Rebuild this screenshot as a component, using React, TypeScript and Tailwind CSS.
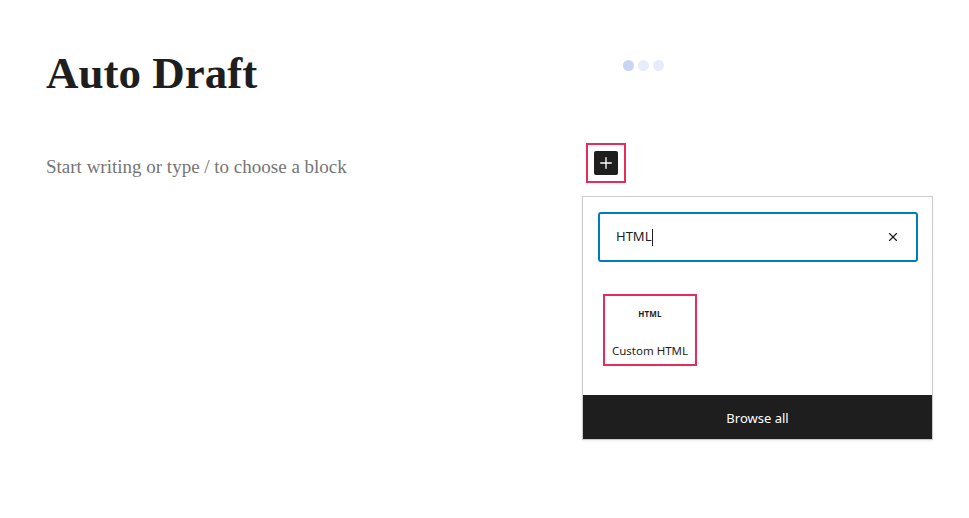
import { X, Plus } from "lucide-react";

const serif = { fontFamily: '"Liberation Serif", serif' };

export default function App() {
  return (
    <div
      className="relative w-[969px] h-[518px] bg-white overflow-hidden"
      style={{ fontFamily: '"Noto Sans", "Open Sans", sans-serif' }}
    >
      {/* Editor canvas */}
      <div className="flex flex-col pl-[46px]">
        <div className="flex items-start mt-[51px]">
          <h1 className="w-[577px] shrink-0 text-[45px] leading-none font-bold text-[#1e1e1e]" style={serif}>
            Auto Draft
          </h1>
          <div className="flex gap-[4px] mt-[9px]">
            <span className="w-[11px] h-[11px] rounded-full bg-[#c9d5f2]" />
            <span className="w-[11px] h-[11px] rounded-full bg-[#e6ecfa]" />
            <span className="w-[11px] h-[11px] rounded-full bg-[#e6ecfa]" />
          </div>
        </div>

        <div className="flex items-start mt-[47px]">
          <p className="w-[540px] shrink-0 text-[19px] leading-[40px] pt-[4px] text-[#757575]" style={serif}>
            Start writing or type / to choose a block
          </p>
          <div className="w-[40px] h-[40px] border-2 border-[#e62c5a] flex items-center justify-center">
            <button className="w-[24px] h-[24px] rounded-[2px] bg-[#1e1e1e] text-white flex items-center justify-center">
              <Plus size={18} strokeWidth={1.8} />
            </button>
          </div>
        </div>
      </div>

      {/* Inserter popover */}
      <div className="absolute left-[582px] top-[196px] w-[351px] h-[244px] bg-white border border-[#cccccc] shadow-[0_1px_2px_rgba(0,0,0,0.08)] flex flex-col">
        <div className="flex-1 px-[15px] pt-[15px]">
          <div className="h-[50px] w-[320px] border-2 border-[#007cba] rounded-[3px] flex items-center pl-[16px] pr-[16px]">
            <span className="text-[13px] text-[#1e1e1e]">HTML</span>
            <span className="w-px h-[17px] bg-[#1e1e1e] ml-[1px]" />
            <X size={14} strokeWidth={2} className="ml-auto text-[#1e1e1e]" />
          </div>
          <div className="mt-[32px] ml-[5px] w-[94px] h-[72px] border-2 border-[#e62c5a] flex flex-col items-center">
            <span className="mt-[14px] text-[8px] font-bold leading-none tracking-[0.2px] text-[#1e1e1e]">HTML</span>
            <span className="mt-[27px] text-[11.5px] leading-none text-[#1e1e1e]">Custom HTML</span>
          </div>
        </div>
        <div className="h-[44px] pt-[3px] bg-[#1e1e1e] flex items-center justify-center text-white text-[13px]">
          Browse all
        </div>
      </div>
    </div>
  );
}
